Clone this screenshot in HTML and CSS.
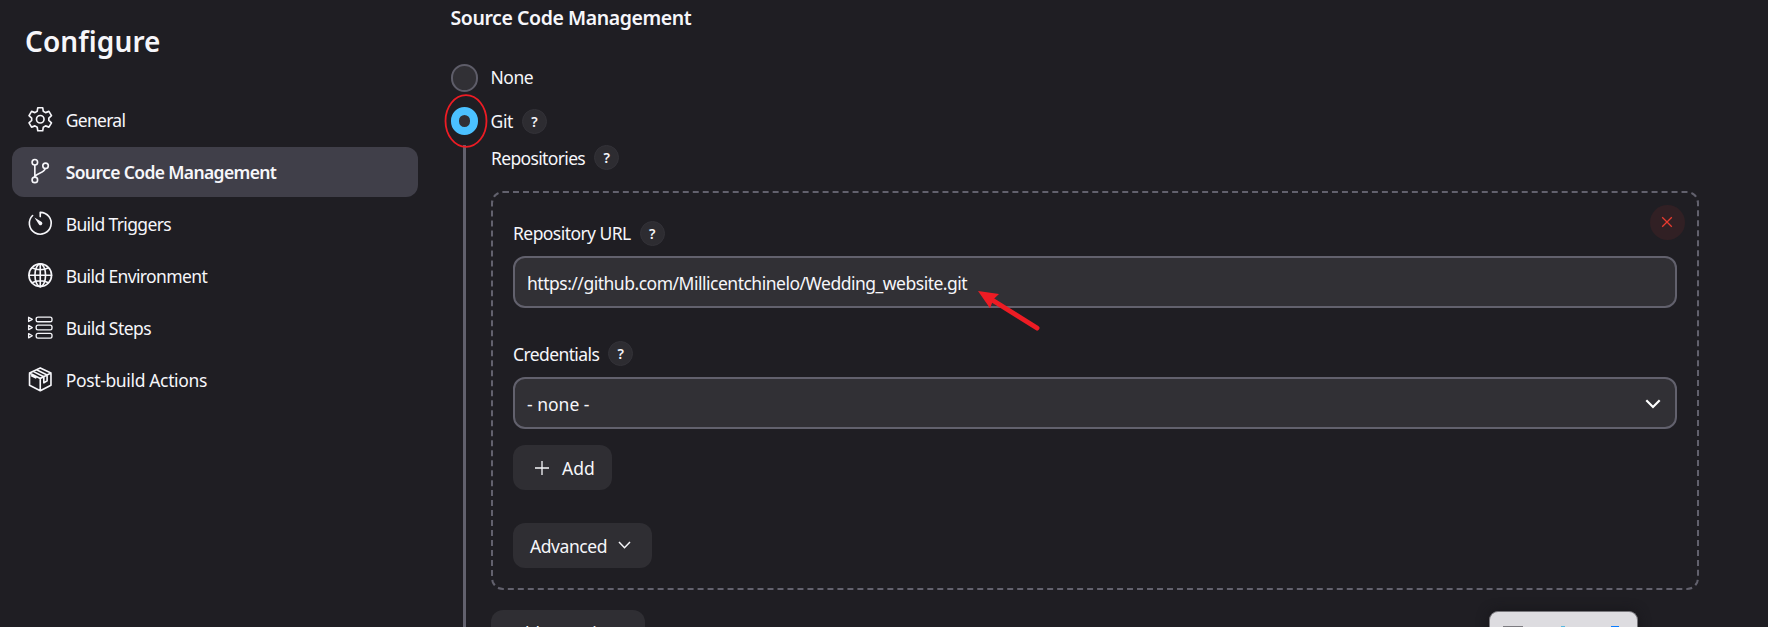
FILE: index.html
```html
<!DOCTYPE html>
<html lang="en">
<head>
<meta charset="utf-8">
<title>Configure</title>
<link rel="stylesheet" href="styles.css">
</head>
<body>
<div class="page">
  <aside class="sidebar">
    <h1 class="title"><span>Configure</span></h1>
    <nav class="nav">
      <a class="item">
        <svg class="icon" viewBox="0 0 24 24"><path d="M9.600 .7h4.800l.6 3.500 2.200 1.300 3.300-1.200 2.500 4.200-2.600 2.300v2.400l2.600 2.300-2.500 4.200-3.300-1.200-2.200 1.300-.6 3.500H9.600L9 19.800l-2.200-1.300-3.300 1.200L1 15.500l2.600-2.300v-2.400L1 8.500l2.500-4.200 3.300 1.200L9 4.200z"/><circle cx="12" cy="12" r="3.700"/></svg>
        <span class="t-general">General</span>
      </a>
      <a class="item active">
        <svg class="icon" viewBox="0 0 24 24"><circle cx="6.700" cy="3.200" r="2.700"/><circle cx="6.700" cy="20.500" r="2.700"/><circle cx="17.200" cy="6.700" r="2.700"/><path d="M6.700 6.200v11.600M16.700 9.400c-.7 4.500-8 4.200-9.800 7.500"/></svg>
        <span class="t-scm">Source Code Management</span>
      </a>
      <a class="item">
        <svg class="icon" viewBox="0 0 24 24"><path d="M12 5.500V1.300A10.700 10.700 0 1 1 4.500 4.400"/><path class="solid" d="M6.300 6.300l7.200 4.500a1.800 1.800 0 0 1-2.600 2.600z"/></svg>
        <span class="t-triggers">Build Triggers</span>
      </a>
      <a class="item">
        <svg class="icon" viewBox="0 0 24 24"><circle cx="12" cy="12" r="11.100"/><ellipse cx="12" cy="12" rx="5.200" ry="11.100"/><path d="M12 .9v22.200M.9 12h22.200M4 4.700c4.500 2.600 11.500 2.600 16 0M4 19.300c4.500-2.600 11.500-2.600 16 0"/></svg>
        <span class="t-env">Build Environment</span>
      </a>
      <a class="item">
        <svg class="icon thin" viewBox="0 0 24 24"><rect x="8" y="2" width="15.500" height="4.600" rx="1.800"/><rect x="8" y="10" width="15.500" height="4.600" rx="1.800"/><rect x="8" y="18" width="15.500" height="4.600" rx="1.800"/><path d="M.6 2.200v4.200l3.600-2.100zM.6 10.200v4.200l3.600-2.100zM.6 18.200v4.200l3.600-2.100z"/></svg>
        <span class="t-steps">Build Steps</span>
      </a>
      <a class="item">
        <svg class="icon" viewBox="0 0 24 24"><path d="M12 .9l10.500 5v12L12 23.200 1.500 17.900v-12zM1.500 5.900L12 11.200l10.500-5.300M12 11.200v12M5 4.300L15.500 9.500v6l3.200-2V7.800L8.300 2.700M3.500 8.600l4 2"/></svg>
        <span class="t-post">Post-build Actions</span>
      </a>
    </nav>
  </aside>

  <main class="main">
    <h2 class="heading"><span>Source Code Management</span></h2>
    <div class="option none"><i class="radio"></i><span class="t-none">None</span></div>
    <div class="option git"><i class="radio checked"><svg class="ring" viewBox="0 0 44 54"><ellipse cx="22" cy="27" rx="20.500" ry="25.800"/></svg></i><span class="t-git">Git</span><b class="help">?</b></div>
    <section class="nested">
      <div class="label repos"><span class="t-repos">Repositories</span><b class="help">?</b></div>
      <div class="repo">
        <button class="delete"><svg viewBox="0 0 12 12"><path d="M1.200 1.200l9.600 9.600M10.800 1.200l-9.600 9.600"/></svg></button>
        <div class="label url"><span class="t-url">Repository URL</span><b class="help">?</b></div>
        <div class="field"><span class="t-value">https://github.com/Millicentchinelo/Wedding_website.git</span>
          <svg class="arrow" viewBox="0 0 64 44"><path class="shaft" d="M15 9.500L59 37"/><path class="head" d="M0 0l21 3-5.500 5.300-3.500 9z"/></svg>
        </div>
        <div class="label cred"><span class="t-cred">Credentials</span><b class="help">?</b></div>
        <div class="field select"><span class="t-opt">- none -</span><svg class="caret" viewBox="0 0 16 10"><path d="M1.300 1.300L8 8l6.700-6.700"/></svg></div>
        <button class="btn add"><svg class="plus" viewBox="0 0 14 14"><path d="M7 0v14M0 7h14"/></svg><span class="t-add">Add</span></button>
        <button class="btn advanced"><span class="t-adv">Advanced</span><svg class="chev" viewBox="0 0 13 8"><path d="M1 1l5.500 5.700L12 1"/></svg></button>
      </div>
      <button class="btn more"><span class="t-more">Add Repository</span></button>
    </section>
  </main>
  <div class="dock"><i class="d1"></i><i class="d2"></i><i class="d3"></i></div>
</div>
</body>
</html>
```
FILE: styles.css
```css
* { box-sizing: border-box; }
body {
  margin: 0;
  background: #1f1e23;
  color: #f6f6fa;
  font: 17.5px/24px "Noto Sans", "Open Sans", sans-serif;
}
.page {
  position: relative;
  display: flex;
  height: 627px;
  overflow: hidden;
}
span { white-space: nowrap; }
svg { fill: none; stroke: currentColor; display: block; flex: none; }
button { border: 0; color: inherit; font: inherit; padding: 0; }

.sidebar { width: 450.5px; padding: 22px 32.5px 0 12px; flex: none; }
.title { margin: 0 0 33px 13px; height: 40px; font-size: 28px; line-height: 38px; font-weight: 600; letter-spacing: .1px; }
.nav { display: grid; gap: 2px; }
.item { display: flex; align-items: center; gap: 13.700px; height: 50px; padding: 0 15.500px 1px; border-radius: 12px; letter-spacing: -.63px; }
.active { background: #403f49; font-weight: 600; }
.icon { width: 24.500px; height: 24.500px; stroke-width: 1.600; stroke-linejoin: round; stroke-linecap: round; overflow: visible; }
.thin { stroke-width: 1.300; }
.solid { fill: currentColor; stroke: none; }
.t-general { letter-spacing: -.7px; }
.t-steps { letter-spacing: -.56px; }
.t-post { letter-spacing: -.35px; }

.main { width: 1248.5px; flex: none; }
.heading { margin: 0; height: 36px; padding-top: 5px; font-size: 19.500px; line-height: 26px; font-weight: 600; letter-spacing: -.43px; }
.option { display: flex; align-items: center; }
.none { height: 28px; margin-top: 28px; }
.git { height: 28px; margin-top: 15px; }
.t-none { letter-spacing: -.5px; margin-top: -2px; }
.t-git { letter-spacing: -.35px; }
.radio { position: relative; width: 27.500px; height: 27.500px; border: 2.500px solid #5e5d69; border-radius: 50%; background: #313035; margin-right: 12.500px; }
.checked { border: 8px solid #4bc1ff; }
.ring { position: absolute; left: -15px; top: -21px; width: 44px; height: 54px; stroke: #ed1c24; stroke-width: 1.800; z-index: 2; }
.help { width: 25px; height: 25px; margin-left: 9px; border: 1px solid #333238; border-radius: 50%; background: #2d2c31; font: 600 14px/23px "Noto Sans", sans-serif; letter-spacing: 0; text-align: center; flex: none; }
.nested { margin: 10px 0 0 12.500px; height: 482px; border-left: 3px solid #62616d; padding-left: 25px; }
.label { display: flex; align-items: center; height: 25px; letter-spacing: -.6px; }
.t-repos { letter-spacing: -.65px; }
.t-url { letter-spacing: -.56px; margin-top: -1px; }
.t-value { letter-spacing: -.49px; }
.t-adv { letter-spacing: -.42px; }
.repo { position: relative; margin-top: 21px; height: 399px; border: 2px dashed #62616d; border-radius: 12px; padding: 28px 20px 0; }
.delete { position: absolute; right: 12px; top: 12px; width: 35px; height: 35px; border-radius: 50%; background: #312024; color: #e83a2f; display: grid; place-items: center; }
.delete svg { width: 12px; height: 12px; stroke-width: 1.300; margin: -1px 1px 0 0; }
.field { position: relative; display: flex; align-items: center; height: 52px; margin-top: 10px; padding: 2px 12px 0; border: 2px solid #62616d; border-radius: 12px; background: #313035; }
.select { margin-top: 11px; justify-content: space-between; }
.cred { margin-top: 33px; }
.arrow { position: absolute; left: 463px; top: 33px; width: 64px; height: 44px; z-index: 2; overflow: visible; }
.shaft { stroke: #ed1c24; stroke-width: 5; stroke-linecap: round; }
.head { fill: #ed1c24; stroke: none; }
.caret { width: 16px; height: 10px; stroke-width: 2.200; stroke: #fff; margin: -1px 2.500px 0 0; }
.btn { display: flex; align-items: center; height: 45px; border-radius: 12px; background: #2f2e33; }
.add { width: 99px; margin-top: 16px; padding: 1px 0 0 22px; gap: 13px; }
.plus { width: 14px; height: 14px; stroke-width: 1.300; margin-top: -1px; }
.advanced { width: 139px; margin-top: 33px; padding: 1px 0 0 17px; gap: 11px; }
.chev { width: 13px; height: 8px; stroke-width: 1.500; margin-top: -3px; }
.more { width: 154px; margin-top: 20px; padding: 1px 0 0 17px; letter-spacing: -.4px; }

.dock { position: absolute; left: 1488.5px; top: 611px; width: 149px; height: 40px; border: 1px solid #77767b; border-bottom: 0; border-radius: 9px 9px 0 0; background: #dddce0; box-shadow: 0 0 12px #17161a; overflow: hidden; display: flex; align-items: flex-start; padding: 14px 0 0 13px; }
.d1 { width: 20px; height: 2px; background: #7c7b80; }
.d2 { width: 4px; height: 2px; background: #58b7df; margin-left: 38px; }
.d3 { width: 8px; height: 2px; background: #0a7cff; margin-left: 46px; }
```
